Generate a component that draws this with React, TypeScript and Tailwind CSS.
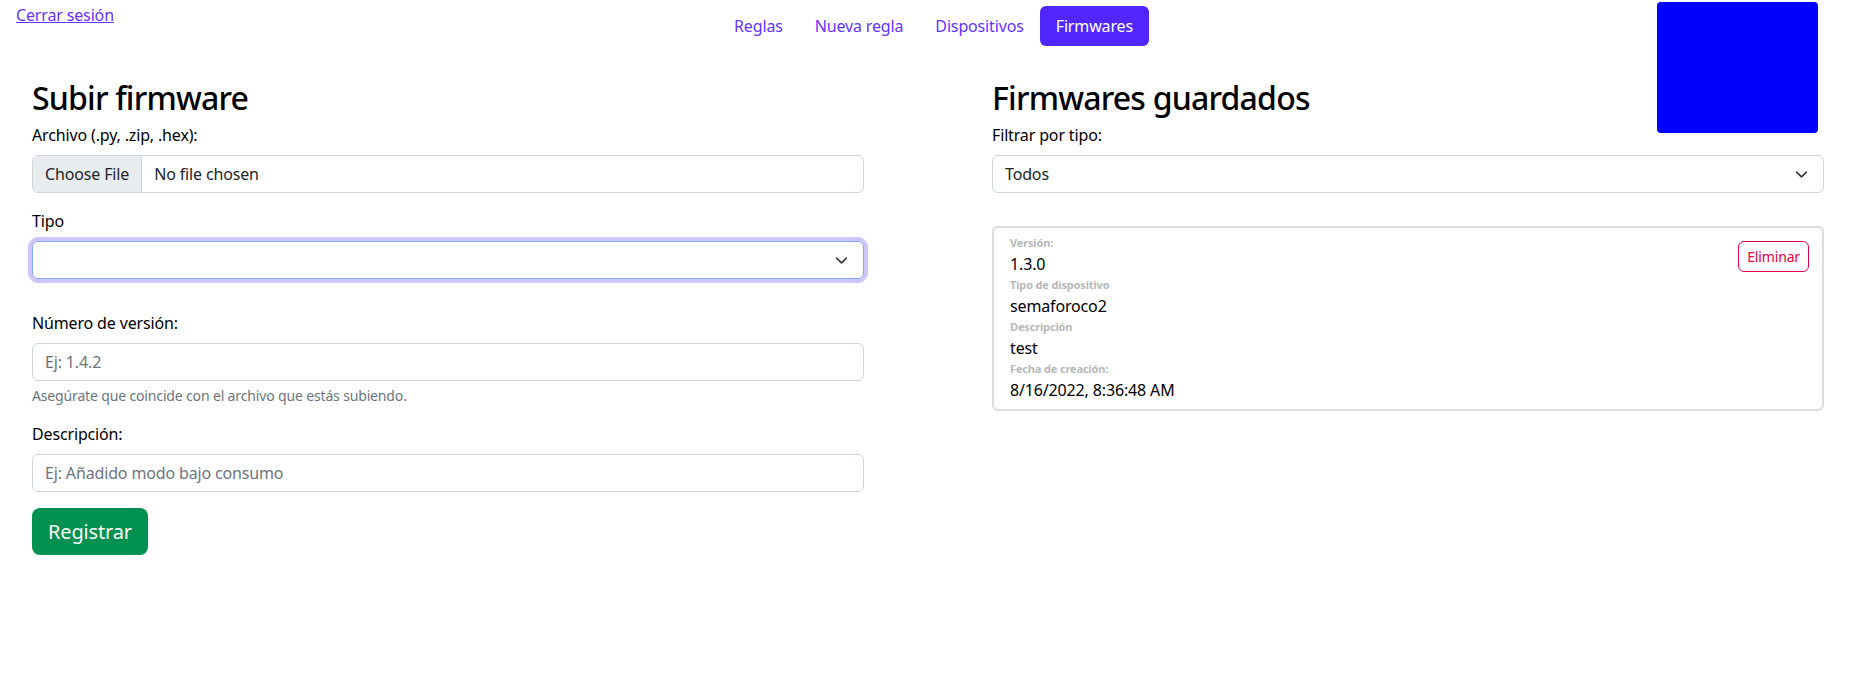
import React from 'react';

const Chevron: React.FC = () => (
  <svg className="h-[13px] w-[13px] text-[#343a40]" viewBox="0 0 16 16" fill="none">
    <path d="m2 5 6 6 6-6" stroke="currentColor" strokeWidth="2" strokeLinecap="round" strokeLinejoin="round" />
  </svg>
);

const navItems = ['Reglas', 'Nueva regla', 'Dispositivos', 'Firmwares'];

const Field: React.FC<{ label: string; value: string }> = ({ label, value }) => (
  <div>
    <div className="text-[11px] font-bold leading-[18px] text-[#b8b8b8]">{label}</div>
    <div className="text-[16px] leading-[24px] text-black">{value}</div>
  </div>
);

export default function App() {
  return (
    <div className="relative min-h-screen bg-white text-[16px] text-[#212529] tracking-[-0.15px]" style={{ fontFamily: '"Noto Sans", "Open Sans", sans-serif' }}>
      {/* header */}
      <div className="grid grid-cols-3">
        <div className="pl-4 pt-[3px]">
          <a href="#" className="text-[#6633ff] underline leading-6">Cerrar sesión</a>
        </div>
        <nav className="flex justify-center mt-[6px]">
          {navItems.map(item => (
            <a
              key={item}
              href="#"
              className={
                item === 'Firmwares'
                  ? 'px-4 py-2 leading-6 rounded-md bg-[#5227ff] text-white'
                  : 'px-4 py-2 leading-6 rounded-md text-[#6633ff]'
              }
            >
              {item}
            </a>
          ))}
        </nav>
        <div />
      </div>

      <div className="absolute top-[2px] right-[49px] w-[161px] h-[131px] rounded-[4px] bg-[#0000ff]" />

      <div className="grid grid-cols-2 gap-x-[128px] pl-8 pr-[43px] pt-[33px]">
        {/* left column */}
        <div>
          <h2 className="text-[32px] font-medium leading-[1.2] tracking-[-0.8px] text-black mb-[6px]">Subir firmware</h2>
          <label className="block mb-2 text-black">Archivo (.py, .zip, .hex):</label>
          <div className="flex h-[38px] rounded-md border border-[#ced4da] overflow-hidden">
            <div className="flex items-center px-3 bg-[#e9ecef] border-r border-[#ced4da]">Choose File</div>
            <div className="flex items-center px-3">No file chosen</div>
          </div>

          <label className="block mt-4 mb-2 text-black">Tipo</label>
          <div className="flex h-[38px] items-center justify-end px-[15px] rounded-md border border-[#86a6fb] ring-4 ring-[#cdc5fe]">
            <Chevron />
          </div>

          <label className="block mt-[32px] mb-2 text-black">Número de versión:</label>
          <div className="flex h-[38px] items-center px-3 rounded-md border border-[#ced4da] text-[#6c757d]">Ej: 1.4.2</div>
          <div className="mt-1 text-[14px] text-[#6c757d]">Asegúrate que coincide con el archivo que estás subiendo.</div>

          <label className="block mt-4 mb-2 text-black">Descripción:</label>
          <div className="flex h-[38px] items-center px-3 rounded-md border border-[#ced4da] text-[#6c757d]">Ej: Añadido modo bajo consumo</div>

          <button className="mt-4 px-4 h-[47px] rounded-lg bg-[#009150] text-white text-[20px]">Registrar</button>
        </div>

        {/* right column */}
        <div>
          <h2 className="text-[32px] font-medium leading-[1.2] tracking-[-0.8px] text-black mb-[6px]">Firmwares guardados</h2>
          <label className="block mb-2 text-black">Filtrar por tipo:</label>
          <div className="flex h-[38px] items-center justify-between pl-3 pr-[15px] rounded-md border border-[#ced4da]">
            <span>Todos</span>
            <Chevron />
          </div>

          <div className="mt-[33px] flex justify-between rounded-md border-2 border-[#dcdcdc] pl-4 pr-[13px] pt-[6px] pb-[7px]">
            <div>
              <Field label="Versión:" value="1.3.0" />
              <Field label="Tipo de dispositivo" value="semaforoco2" />
              <Field label="Descripción" value="test" />
              <Field label="Fecha de creación:" value="8/16/2022, 8:36:48 AM" />
            </div>
            <div className="pt-[7px]">
              <button className="h-[31px] px-[8px] rounded-md border border-[#e5004a] text-[#e5004a] text-[14px]">Eliminar</button>
            </div>
          </div>
        </div>
      </div>
    </div>
  );
}
